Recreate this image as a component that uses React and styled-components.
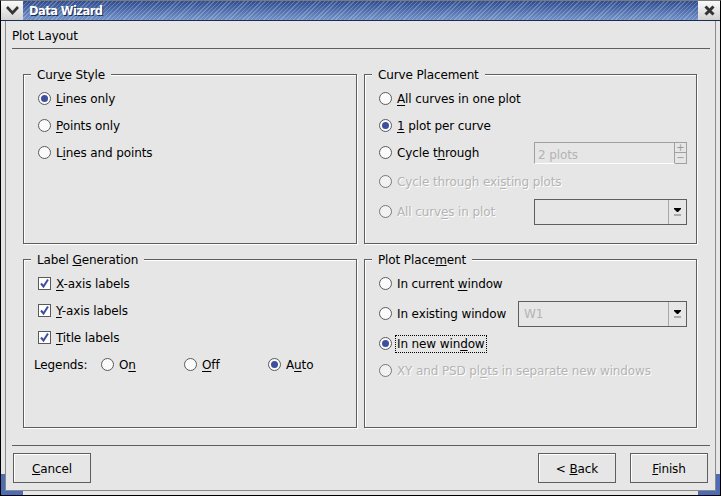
import React from "react";
import styled, { createGlobalStyle } from "styled-components";

const GlobalStyle = createGlobalStyle`
  html, body { margin: 0; padding: 0; background: #000; }
  * { box-sizing: border-box; }
`;

const BG = "#e6e6e6";
const LINE = "#5e5e5e";
const BLUE = "#4e6cb4";

const Window = styled.div`
  position: relative;
  width: 721px;
  height: 496px;
  display: flex;
  flex-direction: column;
  font-family: "DejaVu Sans", sans-serif;
  font-size: 12px;
  letter-spacing: -0.12px;
  color: #000;
  background: ${BG};
  border: 1px solid #000;
  border-top-color: #7a7a7a;
  overflow: hidden;
`;

const TitleBar = styled.div`
  height: 20px;
  flex: none;
  display: flex;
  align-items: stretch;
  border-bottom: 1px solid #1c2b50;
`;

const TitleButton = styled.div`
  width: 22px;
  flex: none;
  display: flex;
  align-items: center;
  justify-content: center;
  background: linear-gradient(#fafafa, #d2d2d2);
`;

const TitleText = styled.div`
  flex: 1;
  padding-left: 6px;
  line-height: 20px;
  color: #fff;
  font-size: 11.5px;
  font-weight: bold;
  letter-spacing: -0.55px;
  text-shadow: 1px 1px 0 #1c2b50;
  background:
    repeating-linear-gradient(135deg, rgba(255,255,255,0.22) 0 1px, transparent 1px 3px),
    linear-gradient(#2f4d8f, #7391c8);
`;

const Frame = styled.div`
  flex: 1;
  display: flex;
  flex-direction: column;
  margin: 0 4px 4px 4px;
  padding: 0 6px 6px 6px;
  border-left: 1px solid #8a8a8a;
  border-right: 1px solid #8a8a8a;
  border-bottom: 1px solid #8a8a8a;
`;

// the blue resize handles sit over the window frame
const Corner = styled.div`
  position: absolute;
  bottom: 0;
  ${(p) => (p.$right ? "right: 0;" : "left: 0;")}
  width: 22px;
  height: 21px;
  border-bottom: 4px solid ${BLUE};
  ${(p) => (p.$right ? "border-right" : "border-left")}: 4px solid ${BLUE};
`;

const PageTitle = styled.div`
  height: 28px;
  line-height: 30px;
  flex: none;
  border-bottom: 1px solid ${LINE};
  margin-right: -1px;
`;

const Grid = styled.div`
  display: grid;
  grid-template-columns: 334px 333px;
  grid-template-rows: 178px 177px;
  column-gap: 7px;
  row-gap: 7px;
  margin: 17px 0 0 11px;
`;

const Group = styled.fieldset`
  margin: 0;
  padding: 3px 9px 0 14px;
  min-width: 0;
  border: 1px solid ${LINE};
  box-shadow: inset 1px 1px 0 #fff, 1px 1px 0 #fff;
  display: flex;
  flex-direction: column;
`;

const Legend = styled.legend`
  margin-left: -7px;
  padding: 0 6px;
  height: 16px;
  line-height: 18px;
  background: ${BG};
`;

const Row = styled.div`
  height: ${(p) => p.$h || 27}px;
  display: flex;
  align-items: center;
  flex: none;
`;

const RadioDot = styled.span`
  width: 13px;
  height: 13px;
  flex: none;
  border-radius: 50%;
  border: 1px solid ${(p) => (p.$off ? "#777" : "#5a5a5a")};
  background: ${(p) => (p.$off ? "#f2f2f2" : "#fbfbfb")};
  margin-right: 5px;
  display: flex;
  align-items: center;
  justify-content: center;
  &::after {
    content: "";
    width: 7px;
    height: 7px;
    border-radius: 50%;
    background: ${(p) => (p.$on ? "#3d4f9f" : "transparent")};
  }
`;

const CheckBox = styled.span`
  width: 13px;
  height: 13px;
  flex: none;
  border: 1px solid #5a5a5a;
  background: #fff;
  margin-right: 5px;
  display: flex;
  align-items: center;
  justify-content: center;
`;

const Label = styled.span`
  color: ${(p) => (p.$off ? "#b4b4b4" : "#000")};
  text-shadow: ${(p) => (p.$off ? "1px 1px 0 #fff" : "none")};
  white-space: nowrap;
  padding: 1px;
  border: 1px ${(p) => (p.$focus ? "dotted #000" : "solid transparent")};
  margin: -2px;
  u { text-underline-offset: 2px; }
`;

const Spin = styled.div`
  width: 153px;
  height: 22px;
  flex: none;
  display: flex;
  align-items: stretch;
  color: #b4b4b4;
  margin-left: auto;
`;

const SpinValue = styled.div`
  flex: 1;
  padding: 1px 0 0 3px;
  line-height: 22px;
  border: 1px solid #a0a0a0;
  border-bottom-color: #fff;
`;

const SpinButtons = styled.div`
  width: 12px;
  display: flex;
  flex-direction: column;
  border: 1px solid #a0a0a0;
  border-left: none;
`;

const SpinButton = styled.div`
  flex: 1;
  font-size: 10px;
  line-height: 9px;
  text-align: center;
  color: #9a9a9a;
  border-bottom: 1px solid #a0a0a0;
  &:last-child { border-bottom: none; }
`;

const Combo = styled.div`
  width: ${(p) => p.$w}px;
  height: 26px;
  flex: none;
  margin-left: auto;
  border: 1px solid ${LINE};
  display: flex;
  color: #b4b4b4;
`;

const ComboValue = styled.div`
  flex: 1;
  padding-left: 5px;
  line-height: 25px;
  border-right: 1px solid #a8a8a8;
`;

const ComboArrow = styled.div`
  width: 17px;
  display: flex;
  align-items: center;
  justify-content: center;
`;

const LegendRow = styled(Row)`
  margin-left: -4px;
`;

const LegendsLabel = styled.span`
  width: 67px;
`;

const LegendOption = styled.span`
  width: ${(p) => p.$w}px;
  display: flex;
  align-items: center;
`;

const Separator = styled.div`
  margin-top: 17px;
  height: 1px;
  flex: none;
  background: ${LINE};
  margin-right: -1px;
`;

const Footer = styled.div`
  display: flex;
  gap: 14px;
  margin: 7px 1px 0 1px;
`;

const Button = styled.div`
  width: 78px;
  height: 30px;
  border: 1px solid ${LINE};
  box-shadow: inset 1px 1px 0 #fff;
  text-align: center;
  line-height: 30px;
  &:first-child { margin-right: auto; }
`;

const Arrow = () => (
  <svg width="9" height="11" viewBox="0 0 9 11">
    <path d="M1 2h7v1l-3 3h-1l-3-3z" fill="#000" />
    <rect x="1" y="8" width="7" height="2" fill="#aaa" />
  </svg>
);

const Tick = () => (
  <svg width="11" height="11" viewBox="0 0 11 11">
    <path d="M2 5.5l2.5 3L9 1.5" fill="none" stroke="#3d4f9f" strokeWidth="2" />
  </svg>
);

const Radio = ({ on, off, focus, children }) => (
  <Row>
    <RadioDot $on={on} $off={off} />
    <Label $off={off} $focus={focus}>{children}</Label>
  </Row>
);

const Check = ({ children }) => (
  <Row>
    <CheckBox><Tick /></CheckBox>
    <Label>{children}</Label>
  </Row>
);

const App = () => {
  return (
    <Window>
      <GlobalStyle />
      <TitleBar>
        <TitleButton>
          <svg width="13" height="9" viewBox="0 0 13 9">
            <path d="M1 1l5.5 6L12 1" fill="none" stroke="#333" strokeWidth="2.6" />
          </svg>
        </TitleButton>
        <TitleText>Data Wizard</TitleText>
        <TitleButton>
          <svg width="11" height="11" viewBox="0 0 11 11">
            <path d="M1.5 1.5l8 8M9.5 1.5l-8 8" fill="none" stroke="#333" strokeWidth="3" />
          </svg>
        </TitleButton>
      </TitleBar>
      <Frame>
        <PageTitle>Plot Layout</PageTitle>
        <Grid>
          <Group>
            <Legend>Cur<u>v</u>e Style</Legend>
            <Radio on><u>L</u>ines only</Radio>
            <Radio><u>P</u>oints only</Radio>
            <Radio>L<u>i</u>nes and points</Radio>
          </Group>
          <Group>
            <Legend>Curve Placement</Legend>
            <Radio><u>A</u>ll curves in one plot</Radio>
            <Radio on><u>1</u> plot per curve</Radio>
            <Row>
              <RadioDot />
              <Label>Cycle t<u>h</u>rough</Label>
              <Spin>
                <SpinValue>2 plots</SpinValue>
                <SpinButtons>
                  <SpinButton>+</SpinButton>
                  <SpinButton>−</SpinButton>
                </SpinButtons>
              </Spin>
            </Row>
            <Row $h={31}>
              <RadioDot $off />
              <Label $off>Cycle through exi<u>s</u>ting plots</Label>
            </Row>
            <Row $h={29}>
              <RadioDot $off />
              <Label $off>All curv<u>e</u>s in plot</Label>
              <Combo $w={153}>
                <ComboValue />
                <ComboArrow><Arrow /></ComboArrow>
              </Combo>
            </Row>
          </Group>
          <Group>
            <Legend>Label <u>G</u>eneration</Legend>
            <Check><u>X</u>-axis labels</Check>
            <Check><u>Y</u>-axis labels</Check>
            <Check><u>T</u>itle labels</Check>
            <LegendRow>
              <LegendsLabel>Legends:</LegendsLabel>
              <LegendOption $w={83}><RadioDot /><Label>O<u>n</u></Label></LegendOption>
              <LegendOption $w={84}><RadioDot /><Label><u>O</u>ff</Label></LegendOption>
              <LegendOption $w={60}><RadioDot $on /><Label>A<u>u</u>to</Label></LegendOption>
            </LegendRow>
          </Group>
          <Group>
            <Legend>Plot Place<u>m</u>ent</Legend>
            <Radio>In current <u>w</u>indow</Radio>
            <Row $h={33}>
              <RadioDot />
              <Label>In existing window</Label>
              <Combo $w={169}>
                <ComboValue>W1</ComboValue>
                <ComboArrow><Arrow /></ComboArrow>
              </Combo>
            </Row>
            <Radio on focus>In new win<u>d</u>ow</Radio>
            <Radio off>XY and PSD pl<u>o</u>ts in separate new windows</Radio>
          </Group>
        </Grid>
        <Separator />
        <Footer>
          <Button><u>C</u>ancel</Button>
          <Button>&lt; <u>B</u>ack</Button>
          <Button><u>F</u>inish</Button>
        </Footer>
      </Frame>
      <Corner />
      <Corner $right />
    </Window>
  );
};

export default App;
